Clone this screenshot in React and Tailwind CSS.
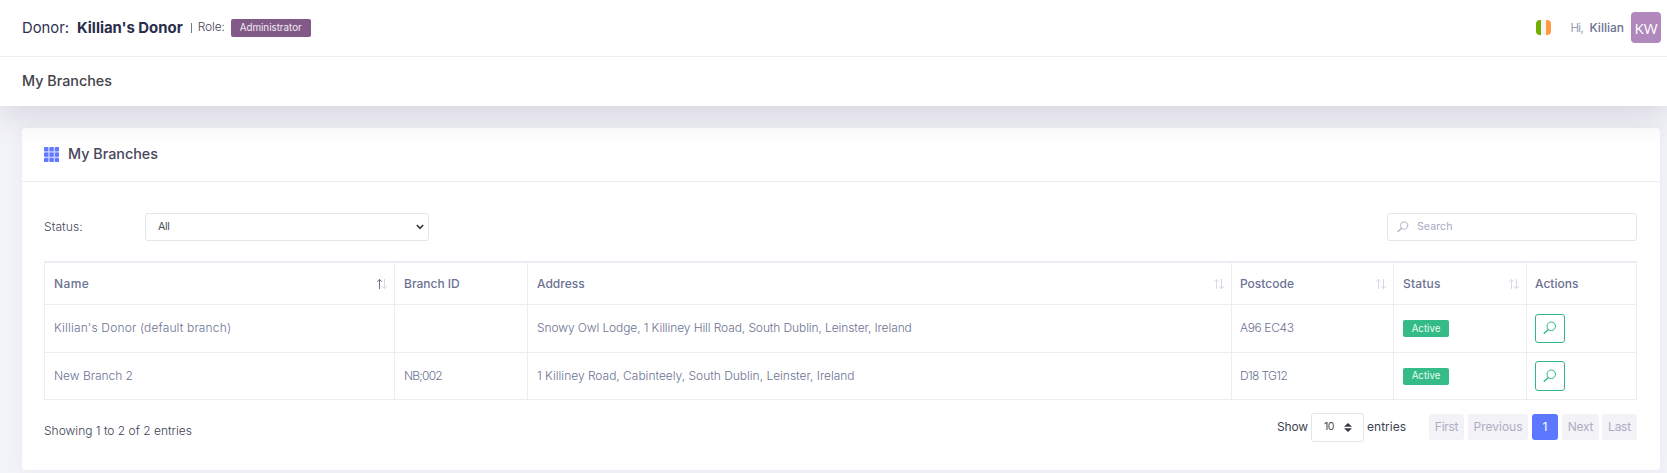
const SearchIcon = ({ className }) => (
  <svg className={className} viewBox="0 0 14 14" fill="none" stroke="currentColor" strokeLinecap="round">
    <circle cx="8.3" cy="5.3" r="4.3" strokeWidth="1" />
    <path d="M5.1 8.7 1.2 12.2" strokeWidth="1.4" />
  </svg>
);

const SortIcon = ({ up }) => (
  <svg className="h-[12px] w-[12px] shrink-0" viewBox="0 0 12 12" fill="none" strokeWidth="1">
    <path d="M3.5 11V1.5M1.2 3.8 3.5 1.3 5.8 3.8" stroke={up ? "#6c7293" : "#d9dbe6"} />
    <path d="M8.5 1V10.5M6.2 8.2 8.5 10.7 10.8 8.2" stroke="#d5d7e4" />
  </svg>
);

const GridIcon = () => (
  <svg className="h-[15px] w-[15px]" viewBox="0 0 15 15" fill="#6379ff">
    <rect x="0.5" y="0.5" width="14" height="14" fill="#c3ccff" />
    {[0, 5.5, 11].map((y) =>
      [0, 5.5, 11].map((x) => <rect key={`${x}-${y}`} x={x} y={y} width="4.2" height="4.2" rx="0.8" />)
    )}
  </svg>
);

const IrishFlag = () => (
  <span className="mb-px flex h-[15px] w-[15px] overflow-hidden rounded-[4px]">
    <span className="flex-1 bg-[#73af00]" />
    <span className="flex-1 bg-[#f5f5f5]" />
    <span className="flex-1 bg-[#ff9b3e]" />
  </span>
);

const COLS = "grid grid-cols-[350px_133px_704px_162px_133px_110px]";

const HEADS = [
  { label: "Name", cls: "tracking-[0.4px]", sort: "up" },
  { label: "Branch ID", cls: "" },
  { label: "Address", cls: "", sort: "both" },
  { label: "Postcode", cls: "-ml-px", sort: "both" },
  { label: "Status", cls: "tracking-[0.2px]", sort: "both" },
  { label: "Actions", cls: "-ml-px" },
];

const ROWS = [
  {
    height: "h-[48px]",
    button: "h-[29px]",
    name: ["Killian's Donor (default branch)", "tracking-[0.15px]"],
    id: ["", ""],
    address: ["Snowy Owl Lodge, 1 Killiney Hill Road, South Dublin, Leinster, Ireland", "tracking-[-0.105px]"],
    postcode: ["A96 EC43", "-ml-px tracking-[-0.38px]"],
  },
  {
    height: "h-[47px]",
    button: "h-[30px]",
    name: ["New Branch 2", "tracking-[-0.03px]"],
    id: ["NB;002", "tracking-[-0.8px]"],
    address: ["1 Killiney Road, Cabinteely, South Dublin, Leinster, Ireland", "tracking-[-0.015px]"],
    postcode: ["D18 TG12", "-ml-px tracking-[-0.65px]"],
  },
];

const Cell = ({ children, className = "" }) => (
  <div className={`flex items-center border-r border-b border-[#ebedf2] pl-[9px] ${className}`}>{children}</div>
);

const PageButton = ({ children, className }) => (
  <button className={`flex h-[26px] items-center justify-center rounded-[3px] bg-[#f3f2f7] text-[#afadc4] ${className}`}>
    {children}
  </button>
);

export default function App() {
  return (
    <div className="h-[473px] overflow-hidden bg-[#f2f3f8] font-['Inter',sans-serif] text-[12px] leading-[18px] text-[#48465b]">
      <div className="relative z-10 bg-white shadow-[0_10px_30px_0px_rgba(82,63,105,0.16)]">
        <header className="flex h-[57px] items-center border-b border-[#ebedf2] pr-[6px] pl-[22px]">
          <span className="text-[14.8px] text-[#2f3150]">Donor:</span>
          <span className="ml-[8px] text-[14.9px] font-bold text-[#2b2d4a]">Killian's Donor</span>
          <span className="mr-[6px] ml-[8px] h-[10px] w-px bg-[#74768c]" />
          <span className="mb-[2px] font-light tracking-[-0.15px]">Role:</span>
          <span className="ml-[6px] flex h-[18px] w-[80px] items-center justify-center rounded-[2px] bg-[#825a88] text-[9.8px] text-[#f3ecf4]">
            Administrator
          </span>
          <div className="ml-auto flex items-center">
            <IrishFlag />
            <span className="ml-[19px] w-[19px] text-[11.5px] tracking-[-0.7px] text-[#959cb6]">Hi,</span>
            <span className="font-medium text-[#6c7293]">Killian</span>
            <span className="mb-px ml-[7px] flex h-[31px] w-[30px] items-center justify-center rounded-[4px] bg-[#b088bb] font-['Open_Sans',sans-serif] text-[15px] font-normal text-white">
              KW
            </span>
          </div>
        </header>
        <div className="flex h-[49px] items-center pb-px pl-[22px] text-[14.35px] font-medium text-[#434349]">
          <h1>My Branches</h1>
        </div>
      </div>

      <main className="mt-[22px] mr-[7px] ml-[22px] h-[342px] rounded-[4px] bg-white shadow-[0_0_13px_0_rgba(82,63,105,0.05)]">
        <div className="flex h-[54px] items-center gap-[9px] border-b border-[#ebedf2] pb-px pl-[22px]">
          <GridIcon />
          <h2 className="text-[14.35px] font-medium text-[#48465b]">My Branches</h2>
        </div>

        <div className="mt-[31px] flex h-[28px] items-center pr-[23px] pl-[22px]">
          <label className="w-[101px] font-light tracking-[0.08px]">Status:</label>
          <div className="flex h-[28px] w-[284px] items-center justify-between rounded-[3px] border border-[#e2e5ec] pr-[4px] pl-[12px] text-[10.7px] tracking-[-0.3px] text-[#495057]">
            All
            <svg className="h-[6px] w-[8px]" viewBox="0 0 8 6" fill="none" stroke="#33363b" strokeWidth="1.6">
              <path d="M0.8 1 4 4.4 7.2 1" />
            </svg>
          </div>
          <div className="ml-auto flex h-[28px] w-[250px] items-center rounded-[3px] border border-[#e2e5ec] pl-[9px] text-[10.7px] text-[#a7abc3]">
            <SearchIcon className="mr-[8px] mb-px h-[12px] w-[12px]" />
            Search
          </div>
        </div>

        <div className="mt-[20px] ml-[22px] w-[1593px] border-t-2 border-l border-[#ebedf2]">
          <div className={`${COLS} h-[42px] font-medium text-[#6c7293]`}>
            {HEADS.map((h) => (
              <Cell key={h.label} className="justify-between pr-[6px]">
                <span className={h.cls}>{h.label}</span>
                {h.sort && <SortIcon up={h.sort === "up"} />}
              </Cell>
            ))}
          </div>
          {ROWS.map((r) => (
            <div key={r.name[0]} className={`${COLS} ${r.height} font-light text-[#6c7293]`}>
              {[r.name, r.id, r.address, r.postcode].map(([text, cls], i) => (
                <Cell key={i} className="pb-px">
                  <span className={cls}>{text}</span>
                </Cell>
              ))}
              <Cell>
                <span className="flex h-[17px] w-[46px] items-center justify-center rounded-[2px] bg-[#34bb87] text-[9.7px] font-normal text-[#e9fbf3]">
                  Active
                </span>
              </Cell>
              <Cell>
                <button className={`-ml-px flex w-[30px] items-center justify-center rounded-[3px] border border-[#2fb885] text-[#2fb885] ${r.button}`}>
                  <SearchIcon className="mb-px h-[14px] w-[14px]" />
                </button>
              </Cell>
            </div>
          ))}
        </div>

        <div className="mt-[12px] flex h-[30px] items-center pr-[23px] pl-[22px]">
          <span className="mt-[7px] font-light text-[#3d3f52]">Showing 1 to 2 of 2 entries</span>
          <div className="ml-auto flex items-center text-[#3d3f52]">
            <span className="w-[34px] tracking-[-0.15px]">Show</span>
            <div className="flex h-[29px] w-[53px] items-center justify-between rounded-[3px] border border-[#e2e5ec] pr-[11px] pl-[12px] text-[10.7px] tracking-[-0.7px] text-[#495057]">
              10
              <svg className="h-[9px] w-[8px]" viewBox="0 0 8 9" fill="#343a40">
                <path d="M0 3.8 4 0 8 3.8ZM0 5.2 4 9 8 5.2Z" />
              </svg>
            </div>
            <span className="ml-[3px]">entries</span>
          </div>
          <div className="ml-[23px] flex">
            <PageButton className="w-[35px] tracking-[-0.3px]">First</PageButton>
            <PageButton className="ml-[4px] w-[60px]">Previous</PageButton>
            <PageButton className="ml-[4px] w-[26px] !bg-[#5d78ff] !text-white">1</PageButton>
            <PageButton className="ml-[4px] w-[37px] tracking-[-0.3px]">Next</PageButton>
            <PageButton className="ml-[3px] w-[35px] tracking-[-0.25px]">Last</PageButton>
          </div>
        </div>
      </main>
    </div>
  );
}
